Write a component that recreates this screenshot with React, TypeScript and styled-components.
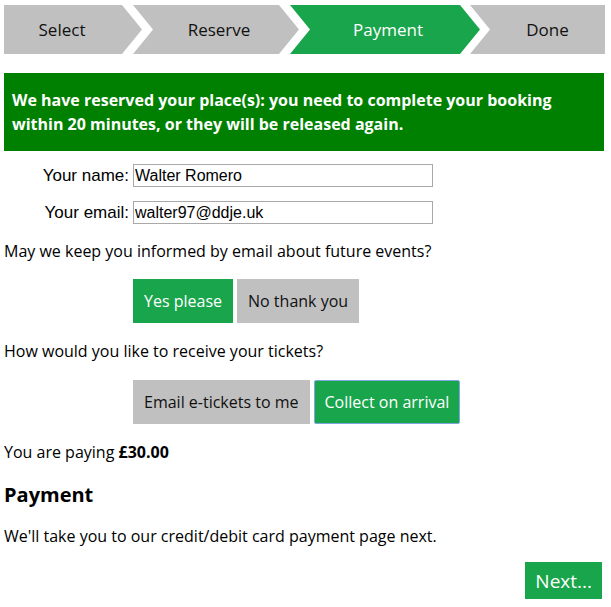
import React, { ReactElement } from 'react'
import styled, { createGlobalStyle } from 'styled-components'

const GlobalStyle = createGlobalStyle`
  html, body {
    margin: 0;
    padding: 0;
    background: #fff;
  }

  body {
    font-family: 'Open Sans', 'Noto Sans', sans-serif;
    font-size: 16px;
    color: #000;
  }
`

const GREY = '#c0c0c0'
const GREEN = '#19a54b'

type StepKind = 'first' | 'middle' | 'last'

const steps: { label: string, width: number, overlap: number, kind: StepKind, pad: string, active?: boolean }[] = [
  { label: 'Select', width: 138, overlap: 0, kind: 'first', pad: '0 22px 0 0' },
  { label: 'Reserve', width: 166, overlap: 9, kind: 'middle', pad: '0 14px 0 20px' },
  { label: 'Payment', width: 190, overlap: 9, kind: 'middle', pad: '0 14px 0 20px', active: true },
  { label: 'Done', width: 135, overlap: 10, kind: 'last', pad: '0 0 0 20px' },
]

const clips: Record<StepKind, string> = {
  first: 'polygon(0 0, calc(100% - 20px) 0, 100% 50%, calc(100% - 20px) 100%, 0 100%)',
  middle: 'polygon(0 0, calc(100% - 20px) 0, 100% 50%, calc(100% - 20px) 100%, 0 100%, 20px 50%)',
  last: 'polygon(0 0, 100% 0, 100% 100%, 0 100%, 20px 50%)',
}

export default function App(): ReactElement {
  return (
    <>
      <GlobalStyle />
      <Page>
        <StepBar>
          {
            steps.map(step => (
              <Step
                key={ step.label }
                $width={ step.width }
                $overlap={ step.overlap }
                $kind={ step.kind }
                $pad={ step.pad }
                $active={ !!step.active }
              >
                { step.label }
              </Step>
            ))
          }
        </StepBar>

        <Banner>
          We have reserved your place(s): you need to complete your booking within 20 minutes, or they will be released again.
        </Banner>

        <Form>
          <Label htmlFor="name">Your name:</Label>
          <Input id="name" defaultValue="Walter Romero" />
          <Label htmlFor="email">Your email:</Label>
          <Input id="email" defaultValue="walter97@ddje.uk" />
        </Form>

        <Question>May we keep you informed by email about future events?</Question>
        <Choices>
          <Choice $selected>Yes please</Choice>
          <Choice>No thank you</Choice>
        </Choices>

        <Question $gap={ 16 }>How would you like to receive your tickets?</Question>
        <Choices $gap={ 17 }>
          <Choice>Email e-tickets to me</Choice>
          <Choice $selected $focused>Collect on arrival</Choice>
        </Choices>

        <Paying>You are paying <strong>£30.00</strong></Paying>

        <Heading>Payment</Heading>
        <Text>We'll take you to our credit/debit card payment page next.</Text>

        <Footer>
          <NextButton>Next...</NextButton>
        </Footer>
      </Page>
    </>
  )
}

const Page = styled.div`
  width: 600px;
  padding: 5px 7px 20px 4px;
`

const StepBar = styled.div`
  display: flex;
  height: 49px;
`

const Step = styled.div<{ $width: number, $overlap: number, $kind: StepKind, $pad: string, $active: boolean }>`
  flex: 0 0 ${ p => p.$width }px;
  margin-left: ${ p => -p.$overlap }px;
  box-sizing: border-box;
  padding: ${ p => p.$pad };
  display: flex;
  align-items: center;
  justify-content: center;
  background: ${ p => p.$active ? GREEN : GREY };
  color: ${ p => p.$active ? '#fff' : '#111' };
  clip-path: ${ p => clips[p.$kind] };
  font-size: 17px;
`

const Banner = styled.div`
  margin-top: 19px;
  background: #008000;
  color: #fff;
  font-weight: 700;
  font-size: 16px;
  line-height: 24px;
  padding: 15px 8px;
`

const Form = styled.div`
  display: grid;
  grid-template-columns: 125px 300px;
  column-gap: 4px;
  row-gap: 14px;
  align-items: center;
  margin-top: 13px;
`

const Label = styled.label`
  font-family: 'Liberation Sans', Arial, sans-serif;
  font-size: 17px;
  text-align: right;
`

const Input = styled.input`
  box-sizing: border-box;
  width: 300px;
  height: 23px;
  border: 1px solid #a9a9a9;
  padding: 0 1px;
  font-family: 'Liberation Sans', Arial, sans-serif;
  font-size: 16px;
  color: #000;
  outline: none;
`

const Question = styled.div<{ $gap?: number }>`
  margin-top: ${ p => p.$gap ?? 15 }px;
  line-height: 24px;
`

const Choices = styled.div<{ $gap?: number }>`
  display: flex;
  gap: 4px;
  padding-left: 129px;
  margin-top: ${ p => p.$gap ?? 16 }px;
`

const Choice = styled.button<{ $selected?: boolean, $focused?: boolean }>`
  box-sizing: border-box;
  height: 44px;
  padding: ${ p => p.$focused ? '0 10px' : '0 11px' };
  border: ${ p => p.$focused ? '1px solid #7ea6e0' : 'none' };
  border-radius: ${ p => p.$focused ? '2px' : '0' };
  background: ${ p => p.$selected ? GREEN : GREY };
  color: ${ p => p.$selected ? '#fff' : '#111' };
  font-family: 'Open Sans', sans-serif;
  font-size: 16px;
  cursor: pointer;
`

const Paying = styled.div`
  margin-top: 16px;
  line-height: 24px;
`

const Heading = styled.h2`
  margin: 17px 0 0;
  font-size: 20px;
  line-height: 28px;
  font-weight: 700;
`

const Text = styled.p`
  margin: 15px 0 0;
  line-height: 24px;
`

const Footer = styled.div`
  display: flex;
  justify-content: flex-end;
  padding-right: 2px;
  margin-top: 14px;
`

const NextButton = styled.button`
  height: 37px;
  padding: 0 10px;
  border: none;
  background: ${ GREEN };
  color: #fff;
  font-family: 'Open Sans', sans-serif;
  font-size: 19px;
  cursor: pointer;
`
